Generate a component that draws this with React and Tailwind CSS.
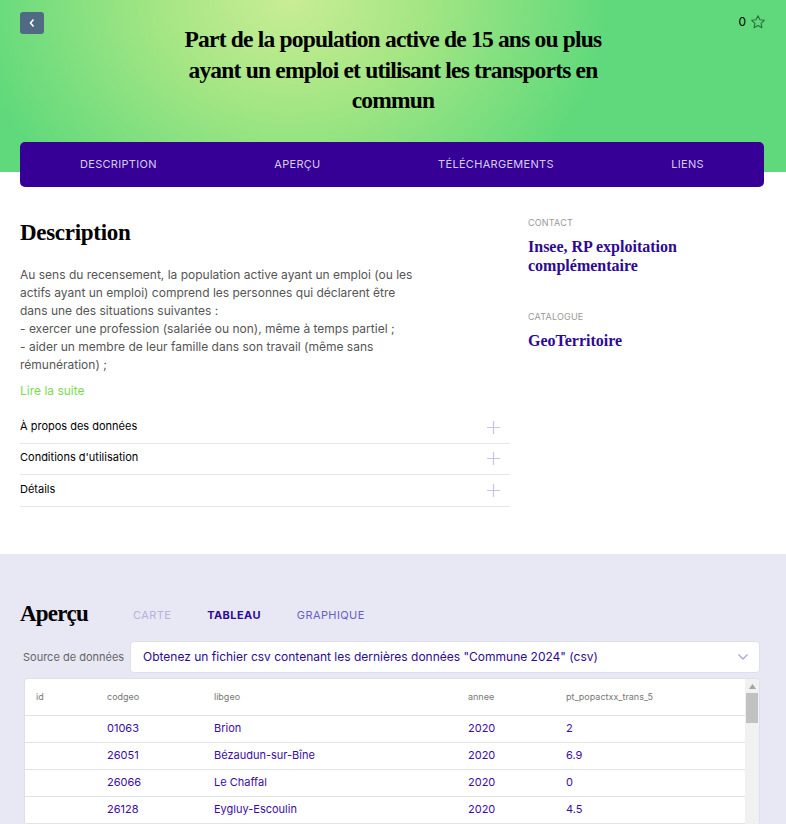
import React from 'react';

const rows = [
    { codgeo: '01063', libgeo: 'Brion', annee: '2020', val: '2' },
    { codgeo: '26051', libgeo: 'Bézaudun-sur-Bîne', annee: '2020', val: '6.9' },
    { codgeo: '26066', libgeo: 'Le Chaffal', annee: '2020', val: '0' },
    { codgeo: '26128', libgeo: 'Eygluy-Escoulin', annee: '2020', val: '4.5' },
];

const serif = "font-['Liberation_Serif',serif]";

const Plus = () => (
    <svg width="13" height="13" viewBox="0 0 13 13" className="text-[#c5c3ec]">
        <path d="M6.5 0v13M0 6.5h13" stroke="currentColor" strokeWidth="1.2" />
    </svg>
);

const App = () => {
    return (
        <div className="min-h-screen bg-[#e7e8f4] font-['Inter',sans-serif] text-black">
            {/* Header */}
            <div className="relative bg-white">
                <div className="h-[172px] bg-[radial-gradient(ellipse_320px_260px_at_290px_0px,#c9ed95_0%,#a6e684_40%,#5fd97b_100%)]">
                    <div className="flex items-start justify-between px-5 pt-3">
                        <button className="w-6 h-[22px] rounded-[3px] bg-[#4f6a82] flex items-center justify-center">
                            <svg width="8" height="10" viewBox="0 0 8 10">
                                <path d="M5.5 1.5L2.5 5l3 3.5" stroke="white" strokeWidth="1.6" fill="none" />
                            </svg>
                        </button>
                        <div className="flex items-center gap-1 pt-[1px] text-[12px] text-black">
                            <span>0</span>
                            <svg width="16" height="16" viewBox="0 0 24 24" fill="none" stroke="#2f6d3e" strokeWidth="1.6" strokeLinejoin="round">
                                <path d="M12 2.5l2.9 6.1 6.6.8-4.9 4.6 1.3 6.6L12 17.3l-5.9 3.3 1.3-6.6-4.9-4.6 6.6-.8z" />
                            </svg>
                        </div>
                    </div>
                    <h1 className={`${serif} -mt-[10px] text-center text-[23.5px] leading-[30.5px] font-bold tracking-[-0.8px]`}>
                        Part de la population active de 15 ans ou plus<br />
                        ayant un emploi et utilisant les transports en<br />
                        commun
                    </h1>
                </div>
                <div className="absolute left-5 right-[22px] top-[142px] h-[45px] rounded-[5px] bg-[#360096] flex items-center justify-between px-[60px] text-[11px] tracking-[0.3px] text-[#d4cdf2]">
                    <span>DESCRIPTION</span>
                    <span>APERÇU</span>
                    <span>TÉLÉCHARGEMENTS</span>
                    <span>LIENS</span>
                </div>
            </div>

            {/* Description */}
            <div className="bg-white px-5 pt-[46px] pb-[47px] flex">
                <div className="w-[490px]">
                    <h2 className={`${serif} text-[23px] font-bold leading-[30px] tracking-[-0.3px]`}>Description</h2>
                    <p className="mt-[18px] w-[400px] text-[12px] leading-[18px] text-[#555]">
                        Au sens du recensement, la population active ayant un emploi (ou les actifs ayant un emploi) comprend les personnes qui déclarent être dans une des situations suivantes :<br />
                        - exercer une profession (salariée ou non), même à temps partiel ;<br />
                        - aider un membre de leur famille dans son travail (même sans rémunération) ;
                    </p>
                    <div className="mt-[8px] text-[12px] text-[#7ddc4c]">Lire la suite</div>
                    <div className="mt-[12px] text-[11px]">
                        {['À propos des données', "Conditions d'utilisation", 'Détails'].map((t) => (
                            <div key={t} className="flex items-center justify-between h-[31.5px] border-b border-[#e6e6e6] pr-[10px]">
                                <span className="-mt-[3px]">{t}</span>
                                <Plus />
                            </div>
                        ))}
                    </div>
                </div>
                <div className="ml-[18px] -mt-[2px]">
                    <div className="text-[9px] text-[#999] tracking-[0.2px]">CONTACT</div>
                    <div className={`${serif} mt-[7px] text-[16px] font-bold leading-[19px] text-[#2e0a94]`}>
                        Insee, RP exploitation<br />complémentaire
                    </div>
                    <div className="mt-[35px] text-[9px] text-[#999] tracking-[0.2px]">CATALOGUE</div>
                    <div className={`${serif} mt-[8px] text-[16px] font-bold leading-[19px] text-[#2e0a94]`}>GeoTerritoire</div>
                </div>
            </div>

            {/* Aperçu */}
            <div className="px-5 pt-[43px] pb-10">
                <div className="flex items-center">
                    <h2 className={`${serif} text-[23px] font-bold tracking-[-0.8px]`}>Aperçu</h2>
                    <div className="ml-[45px] mt-[3px] flex gap-[36px] text-[11px] tracking-[0.4px]">
                        <span className="text-[#b4b3e0]">CARTE</span>
                        <span className="font-bold text-[#2e0a94]">TABLEAU</span>
                        <span className="text-[#6a5dc4]">GRAPHIQUE</span>
                    </div>
                </div>
                <div className="mt-[10px] flex items-center">
                    <span className="ml-[3px] w-[107px] text-[11px] text-[#666]">Source de données</span>
                    <div className="flex-1 mr-[6px] h-[32px] rounded-[4px] border border-[#dedfea] bg-white flex items-center justify-between pl-[12px] pr-[10px] text-[12px] text-[#2e0a94]">
                        <span>Obtenez un fichier csv contenant les dernières données "Commune 2024" (csv)</span>
                        <svg width="12" height="8" viewBox="0 0 12 8">
                            <path d="M1.5 1.5L6 6l4.5-4.5" stroke="#a9a7dc" strokeWidth="1.4" fill="none" />
                        </svg>
                    </div>
                </div>
                <div className="mt-[5px] ml-1 mr-[6px] flex rounded-[4px] border border-[#dedfea] bg-white overflow-hidden">
                    <table className="flex-1 text-left border-collapse">
                        <thead>
                            <tr className="h-[36px] text-[9px] text-[#777] border-b border-[#e3e3e3]">
                                <th className="font-normal pl-[11px] w-[82px]">id</th>
                                <th className="font-normal w-[107px]">codgeo</th>
                                <th className="font-normal w-[254px]">libgeo</th>
                                <th className="font-normal w-[98px]">annee</th>
                                <th className="font-normal">pt_popactxx_trans_5</th>
                            </tr>
                        </thead>
                        <tbody className="text-[11px] text-[#3a0ca6]">
                            {rows.map((r) => (
                                <tr key={r.codgeo} className="h-[27px] border-b border-[#e3e3e3]">
                                    <td className="pl-[11px]"></td>
                                    <td>{r.codgeo}</td>
                                    <td>{r.libgeo}</td>
                                    <td>{r.annee}</td>
                                    <td>{r.val}</td>
                                </tr>
                            ))}
                        </tbody>
                    </table>
                    <div className="w-[14px] bg-[#f1f1f1] flex flex-col items-center pt-[5px]">
                        <svg width="7" height="5" viewBox="0 0 7 5"><path d="M3.5 0L7 5H0z" fill="#a3a3a3" /></svg>
                        <div className="mt-[4px] w-[12px] h-[30px] bg-[#c1c1c1]" />
                    </div>
                </div>
            </div>
        </div>
    );
};

export default App;
